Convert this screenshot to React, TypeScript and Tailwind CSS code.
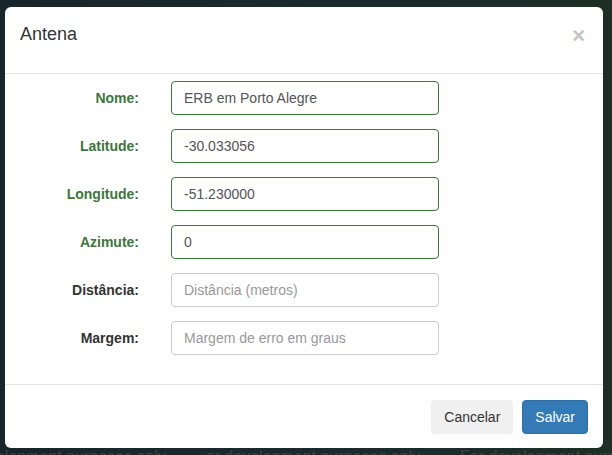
import React from "react";

type Field = {
    label: string;
    value?: string;
    placeholder?: string;
    ok?: boolean;
};

const fields: Field[] = [
    { label: "Nome:", value: "ERB em Porto Alegre", ok: true },
    { label: "Latitude:", value: "-30.033056", ok: true },
    { label: "Longitude:", value: "-51.230000", ok: true },
    { label: "Azimute:", value: "0", ok: true },
    { label: "Distância:", placeholder: "Distância (metros)" },
    { label: "Margem:", placeholder: "Margem de erro em graus" },
];

const FormRow = ({ field }: { field: Field }) => (
    <div className="flex items-center">
        <label
            className={`w-[134px] text-right text-[14px] font-bold ${field.ok ? "text-[#3c763d]" : "text-[#333]"}`}
        >
            {field.label}
        </label>
        <input
            readOnly
            defaultValue={field.value}
            placeholder={field.placeholder}
            className={`ml-[32px] h-[34px] w-[268px] rounded-[4px] border bg-white px-[12px] text-[14px] text-[#555] outline-none placeholder:text-[#999] ${field.ok ? "border-[#3c763d]" : "border-[#ccc]"}`}
        />
    </div>
);

export default function App() {
    return (
        <div
            className="h-[455px] w-[612px] overflow-hidden bg-gradient-to-r from-[#18262b] via-[#1b2a2f] to-[#1d2e26] pt-[7px]"
            style={{ fontFamily: '"Liberation Sans", Arial, sans-serif' }}
        >
            {/* Modal */}
            <div className="ml-[5px] w-[598px] rounded-[6px] bg-white">
                {/* Header */}
                <div className="flex h-[67px] items-start justify-between border-b border-[#e5e5e5] pl-[15px] pr-[18px] pt-[15px]">
                    <h4 className="text-[18px] leading-[25px] text-[#333]">Antena</h4>
                    <button className="mt-[3px] text-[22px] font-bold leading-none text-[#c4c4c4]">×</button>
                </div>

                {/* Body */}
                <form className="flex flex-col gap-[14px] pt-[7px] pb-[29px]">
                    {fields.map((f) => (
                        <FormRow key={f.label} field={f} />
                    ))}
                </form>

                {/* Footer */}
                <div className="flex justify-end gap-[9px] border-t border-[#e5e5e5] px-[15px] pt-[15px] pb-[14px]">
                    <button className="h-[34px] rounded-[4px] border border-[#f0f0f0] bg-[#f0f0f0] px-[12px] text-[14px] text-[#333]">
                        Cancelar
                    </button>
                    <button className="h-[34px] rounded-[4px] border border-[#2e6da4] bg-[#337ab7] px-[12px] text-[14px] text-white">
                        Salvar
                    </button>
                </div>
            </div>

            {/* map watermark peeking below */}
            <div className="mt-[1px] flex gap-[40px] whitespace-nowrap text-[16px] leading-none text-[#404040]">
                <span className="-ml-[30px]">development purposes only</span>
                <span>or development purposes only</span>
                <span>For development purposes only</span>
            </div>
        </div>
    );
}
